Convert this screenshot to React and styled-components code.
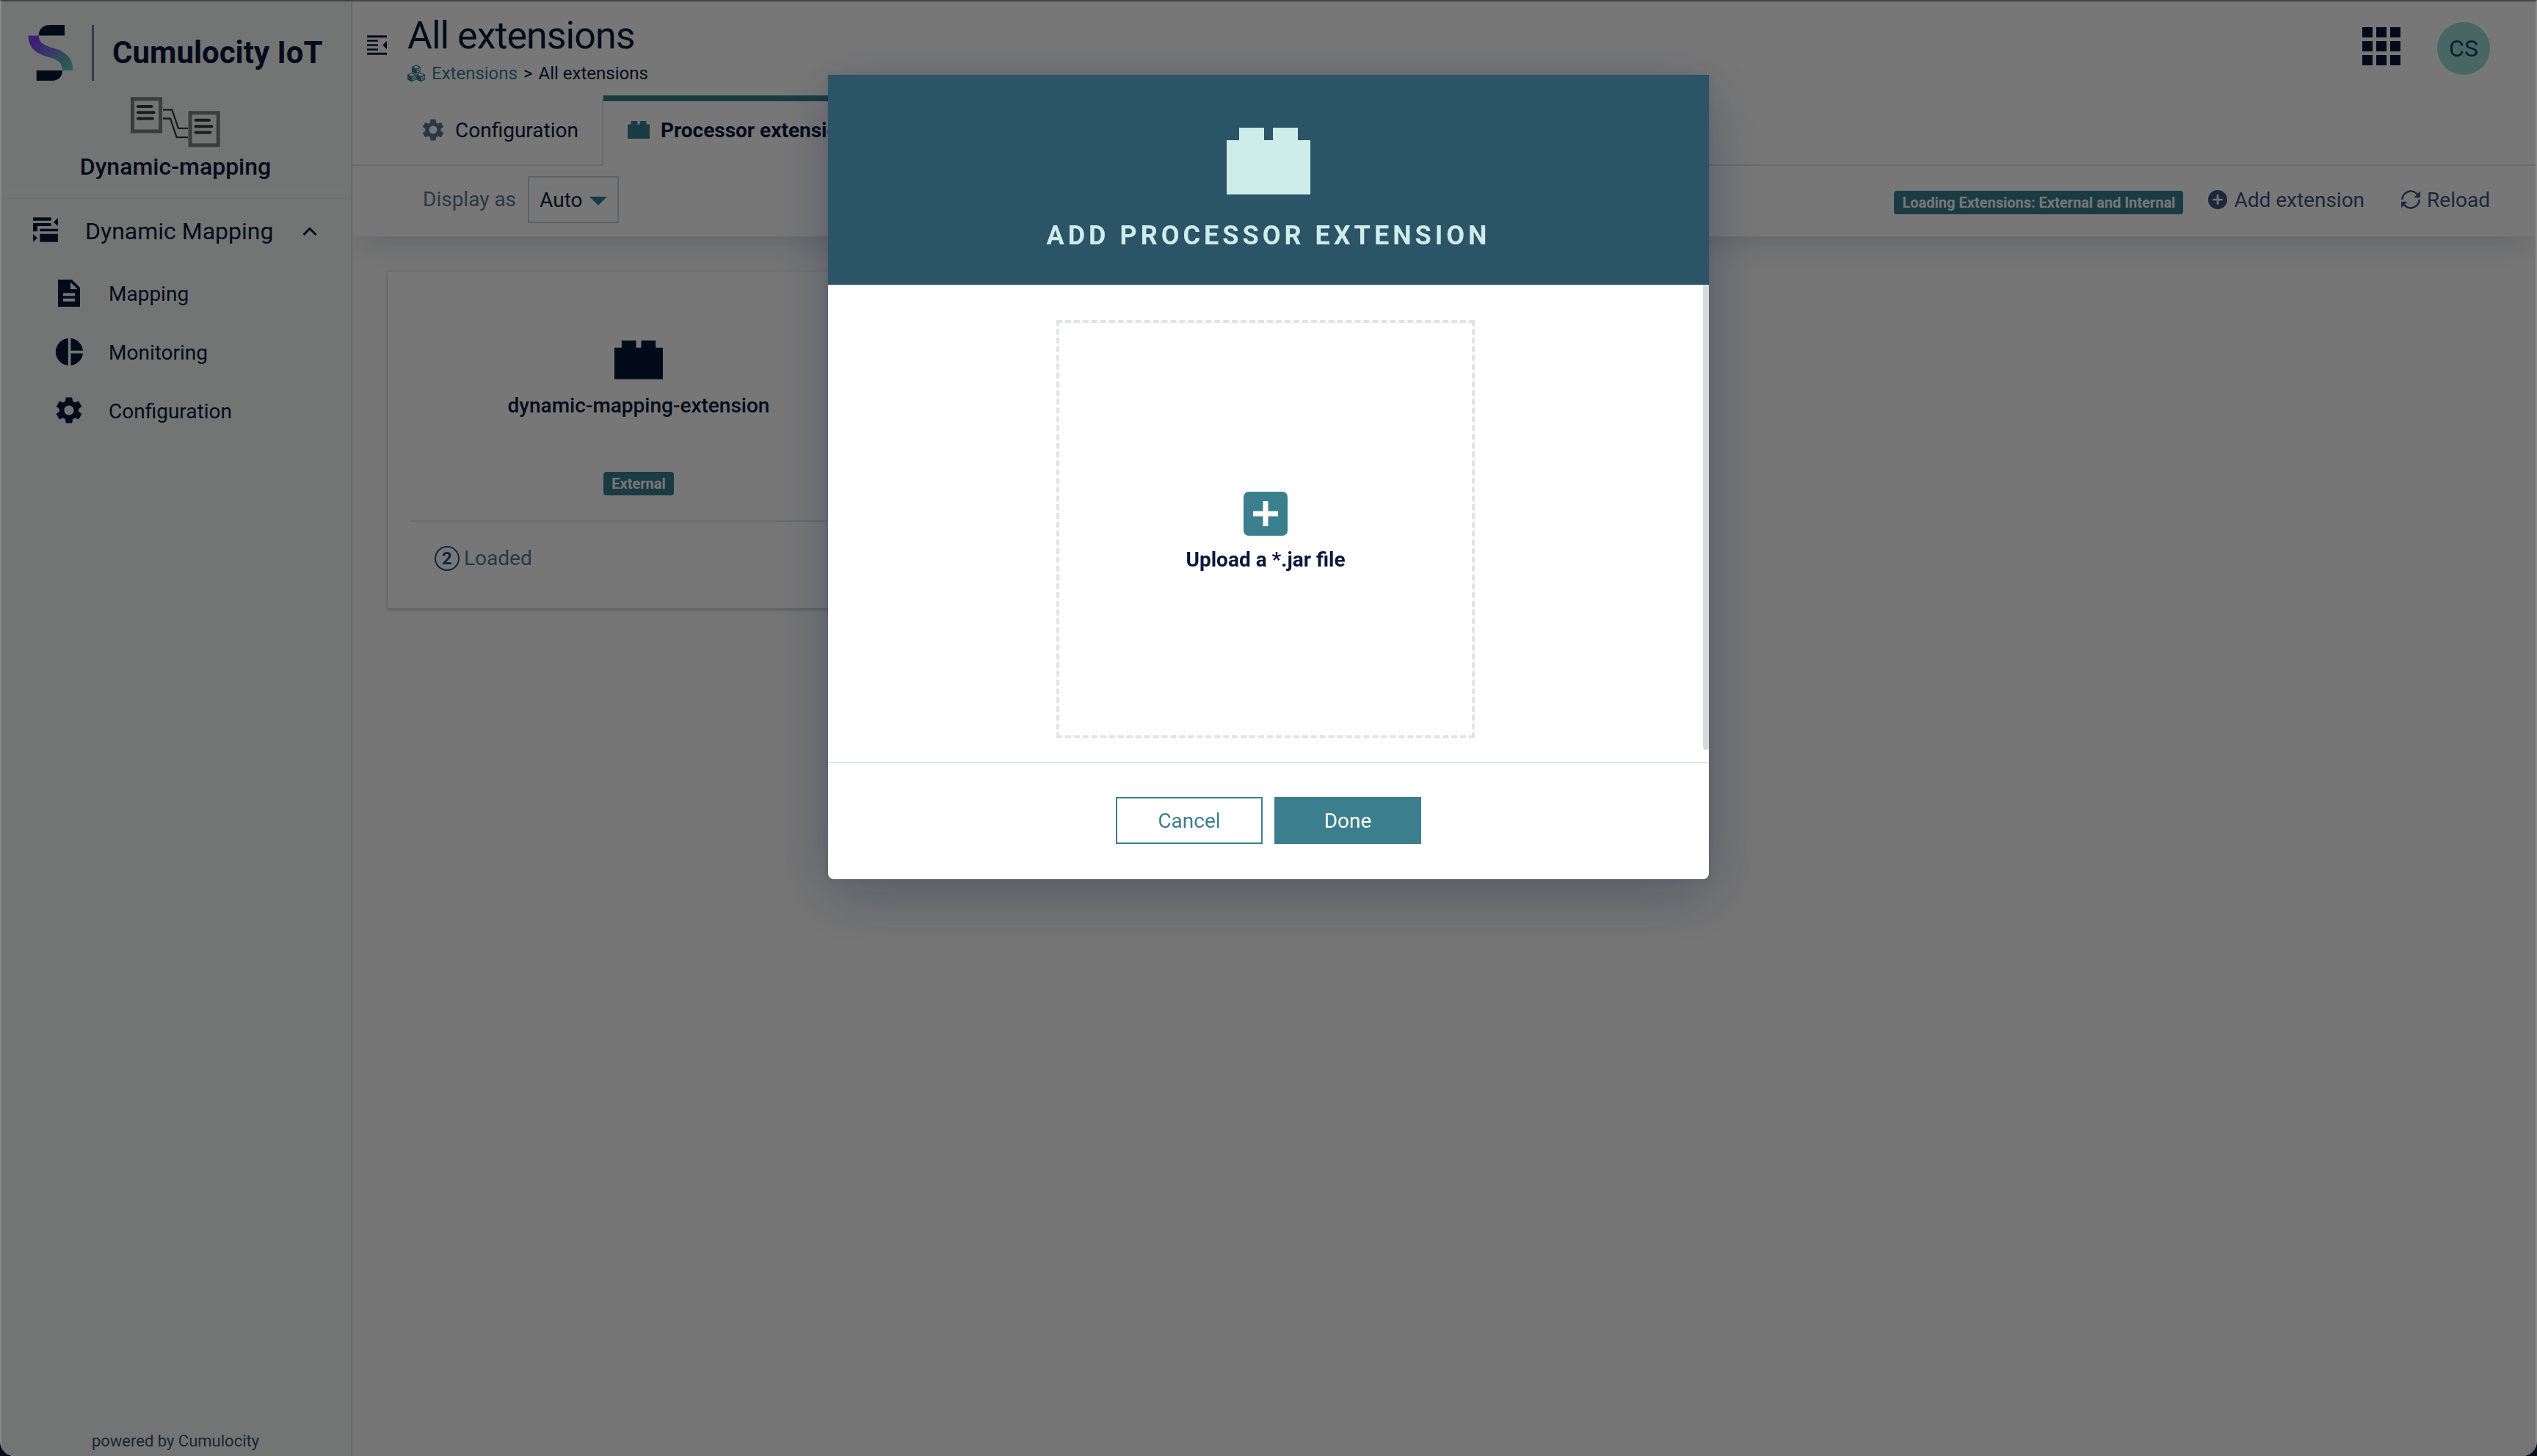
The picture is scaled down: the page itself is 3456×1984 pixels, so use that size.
import React from "react";
import styled, { createGlobalStyle, css } from "styled-components";
import { MdSettings } from "react-icons/md";

const c = {
  ink: "#08193b",
  slate: "#5f7696",
  steel: "#40547a",
  teal: "#3b7f8f",
  line: "#e0e4e8",
  field: "#c6d2dc",
  mint: "#ceecea",
};

const GlobalStyle = createGlobalStyle`
  *, *::before, *::after { box-sizing: border-box; }
  body {
    margin: 0;
    background: #020c1c;
    color: ${c.ink};
    font-size: 28px;
    line-height: 40px;
  }
  body, button, select, input { font-family: Roboto, "Liberation Sans", sans-serif; }
  h1, h2, h3, p, ul, ol { margin: 0; padding: 0; }
  ul, ol { list-style: none; }
  a { color: inherit; text-decoration: none; }
  svg { display: block; flex: none; }
`;

const bareButton = css`
  border: 0;
  padding: 0;
  background: none;
  color: inherit;
  font-size: 28px;
  cursor: pointer;
`;

const Window = styled.div`
  display: flex;
  min-height: 100vh;
  border: 2px solid #898989;
  border-top-color: #444444;
  border-bottom: 0;
  border-radius: 0 0 20px 20px;
  overflow: hidden;
  background: #fbfbfb;
`;

/* ---------- navigator ---------- */

const Sidebar = styled.aside`
  display: flex;
  flex-direction: column;
  flex: none;
  width: 478px;
  background: #f7faf9;
  border-right: 2px solid #dfe2e2;
`;

const Brand = styled.div`
  display: flex;
  align-items: center;
  gap: 25px;
  height: 76px;
  margin: 32px 0 22px;
  padding-left: 36px;
  font-size: 42px;
  font-weight: 700;
`;

const BrandRule = styled.span`
  width: 3px;
  height: 76px;
  background: #6d839f;
`;

const AppHeading = styled.div`
  display: flex;
  flex-direction: column;
  align-items: center;
  gap: 6px;
  padding: 0 2px 6px 0;
  border-bottom: 1px solid #f1f4f3;
  font-size: 32px;
  font-weight: 500;
`;

const Nav = styled.nav`
  margin-top: 16px;
  border-top: 1px solid #f1f4f3;
`;

const NavGroup = styled.button`
  ${bareButton}
  display: flex;
  align-items: center;
  gap: 36px;
  width: 100%;
  height: 88px;
  padding: 0 46px 0 42px;
  font-size: 32px;
`;

const NavLabel = styled.span`
  flex: 1;
  text-align: left;
`;

const NavList = styled.ul`
  padding-top: 2px;
`;

const NavLink = styled.a`
  display: flex;
  align-items: center;
  gap: 34px;
  height: 80px;
  padding-left: 72px;
`;

const NavIcon = styled.span`
  display: flex;
  justify-content: center;
  width: ${(p) => p.$width}px;
  padding-bottom: 4px;
`;

const Powered = styled.p`
  margin-top: auto;
  padding: 0 2px 4px 0;
  text-align: center;
  color: #3d506e;
  font-size: 22px;
  line-height: 32px;
`;

/* ---------- main column ---------- */

const Main = styled.main`
  flex: 1;
  min-width: 0;
  overflow: hidden;
`;

const TopPanel = styled.div`
  background: #ffffff;
  box-shadow: 0 20px 40px -12px rgba(8, 25, 59, 0.15);
`;

const Header = styled.header`
  display: flex;
  align-items: flex-start;
  height: 128px;
  padding: 16px 62px 0 20px;
`;

const ToggleButton = styled.button`
  ${bareButton}
  margin: 30px 28px 0 0;
`;

const Heading = styled.div`
  flex: 1;
`;

const PageTitle = styled.h1`
  font-size: 52px;
  font-weight: 400;
  letter-spacing: -1px;
  line-height: 62px;
`;

const Crumbs = styled.ol`
  display: flex;
  align-items: center;
  gap: 8px;
  margin-top: 4px;
  font-size: 24px;
  line-height: 32px;
`;

const CrumbLink = styled.a`
  display: flex;
  align-items: center;
  gap: 9px;
  color: ${c.teal};
`;

const HeaderTools = styled.div`
  display: flex;
  align-items: center;
  gap: 50px;
  padding-top: 12px;
`;

const AppsButton = styled.button`
  ${bareButton}
  padding-bottom: 6px;
`;

const Avatar = styled.button`
  ${bareButton}
  width: 72px;
  height: 72px;
  border-radius: 50%;
  background: #9bdcd6;
  color: #213f5a;
  font-size: 32px;
`;

const Tabs = styled.div`
  display: flex;
  height: 96px;
  padding-left: 62px;
  background: linear-gradient(${c.line}, ${c.line}) 0 100% / 62px 2px no-repeat;
`;

const Tab = styled.button`
  ${bareButton}
  display: flex;
  align-items: center;
  gap: 14px;
  padding: 0 32px;
  border-bottom: 2px solid ${c.line};
  white-space: nowrap;
  ${(p) =>
    p.$active &&
    css`
      border: 0 solid ${c.line};
      border-width: 0 2px;
      padding-bottom: 2px;
      box-shadow: inset 0 8px ${c.teal};
      font-weight: 700;
    `}
`;

const TabIcon = styled.span`
  display: flex;
  justify-content: center;
  width: 32px;
  color: ${(p) => (p.$active ? c.teal : c.slate)};
`;

const TabRest = styled.div`
  flex: 1;
  border-bottom: 2px solid ${c.line};
`;

const Toolbar = styled.div`
  display: flex;
  align-items: center;
  height: 96px;
  padding: 14px 62px 18px 96px;
`;

const FieldLabel = styled.label`
  color: ${c.slate};
`;

const SelectBox = styled.div`
  display: grid;
  align-items: center;
  margin: 0 auto 0 16px;

  & > * { grid-area: 1 / 1; }
  & > svg { justify-self: end; margin: 4px 16px 0 0; pointer-events: none; }
`;

const Select = styled.select`
  appearance: none;
  width: 124px;
  height: 64px;
  padding: 0 14px;
  border: 2px solid ${c.field};
  border-radius: 0;
  background: #ffffff;
  color: ${c.ink};
  font-size: 28px;
`;

const Badge = styled.span`
  height: 32px;
  padding: 0 11px;
  border-radius: 4px;
  background: ${c.teal};
  color: #ffffff;
  font-size: 20px;
  font-weight: 700;
  line-height: 32px;
`;

const Status = styled.div`
  display: flex;
  margin-top: 8px;
`;

const ToolButton = styled.button`
  ${bareButton}
  display: flex;
  align-items: center;
  gap: 9px;
  margin-left: ${(p) => p.$space}px;
  color: ${c.steel};
`;

const Content = styled.section`
  padding: 48px;
`;

const Card = styled.article`
  width: 684px;
  background: #ffffff;
  box-shadow: 0 2px 4px rgba(8, 25, 59, 0.25), 0 0 2px rgba(8, 25, 59, 0.15);
`;

const CardBody = styled.div`
  display: flex;
  flex-direction: column;
  align-items: center;
  margin: 0 32px;
  padding: 94px 0 34px;
  border-bottom: 2px solid ${c.line};
`;

const CardTitle = styled.h3`
  margin: 16px 0 70px;
  font-size: 28px;
  font-weight: 500;
`;

const CardFooter = styled.div`
  display: flex;
  align-items: center;
  gap: 6px;
  padding: 30px 64px 48px;
  color: ${c.slate};
`;

const Count = styled.span`
  width: 34px;
  height: 34px;
  border: 2px solid #26568f;
  border-radius: 50%;
  color: #26508a;
  font-size: 24px;
  font-weight: 700;
  line-height: 30px;
  text-align: center;
`;

/* ---------- dialog ---------- */

const Backdrop = styled.div`
  position: fixed;
  inset: 2px 2px 0;
  display: flex;
  justify-content: center;
  align-items: flex-start;
  padding-top: 100px;
  border-radius: 0 0 18px 18px;
  overflow: hidden;
  background: rgba(0, 0, 0, 0.533);
`;

const Dialog = styled.div`
  width: 1200px;
  border-radius: 0 0 8px 8px;
  background: #ffffff;
  box-shadow: 0 0 8px rgba(8, 25, 59, 0.08), 0 20px 80px rgba(8, 25, 59, 0.3);
`;

const DialogHeader = styled.header`
  display: flex;
  flex-direction: column;
  align-items: center;
  gap: 36px;
  padding: 72px 0 47px;
  background: #2b5466;
  color: ${c.mint};
`;

const DialogTitle = styled.h2`
  font-size: 36px;
  font-weight: 700;
  letter-spacing: 5px;
  text-transform: uppercase;
`;

const DialogBody = styled.div`
  display: flex;
  height: 650px;
`;

const DropArea = styled.div`
  display: flex;
  flex: 1;
  justify-content: center;
  padding-top: 48px;
`;

const DropZone = styled.button`
  ${bareButton}
  display: flex;
  flex-direction: column;
  align-items: center;
  justify-content: center;
  gap: 13px;
  width: 570px;
  height: 570px;
  padding-top: 10px;
  border: 4px dashed ${c.line};
  font-weight: 700;
  line-height: 40px;
`;

const ScrollThumb = styled.div`
  width: 8px;
  height: 634px;
  border-radius: 0 0 4px 4px;
  background: #d6d9db;
`;

const DialogFooter = styled.footer`
  display: flex;
  justify-content: center;
  gap: 16px;
  padding: 46px 0 48px;
  border-top: 2px solid ${c.line};
`;

const ActionButton = styled.button`
  width: 200px;
  height: 64px;
  border: 2px solid ${c.teal};
  background: ${(p) => (p.$primary ? c.teal : "#ffffff")};
  color: ${(p) => (p.$primary ? "#ffffff" : c.teal)};
  font-size: 28px;
  cursor: pointer;
`;

/* ---------- drawings ---------- */

const Brick = ({ width }) => (
  <svg width={width} viewBox="0 0 114 91" fill="currentColor" aria-hidden="true">
    <path d="M0 17H17V0H51V17H63V0H97V17H114V91H0Z" />
  </svg>
);

const LogoMark = () => (
  <svg width="62" height="76" viewBox="0 0 181 226" aria-hidden="true">
    <defs>
      <linearGradient id="band" x1="0" y1="0.2" x2="1" y2="0.8">
        <stop offset="0.1" stopColor="#8343f6" />
        <stop offset="1" stopColor="#5fc9b8" />
      </linearGradient>
    </defs>
    <path d="M42 43C42 17 60 0 88 0H147V43Z" fill={c.ink} />
    <path
      d="M0 43H42C42 73 68 84 100 93C150 107 181 132 181 184H138C138 156 122 141 90 132C38 119 0 98 0 43Z"
      fill="url(#band)"
    />
    <path d="M33 184H138C138 209 122 226 95 226H33Z" fill={c.ink} />
  </svg>
);

const Sheet = ({ x, y }) => (
  <g transform={`translate(${x} ${y})`} fill="none">
    <rect x="7.5" y="7.5" width="115" height="133" stroke="#808080" strokeWidth="15" />
    <path
      d="M30 38H86M30 63H96M30 88H90"
      stroke="#3a3a3a"
      strokeWidth="12"
      strokeLinecap="round"
    />
  </g>
);

const MappingArt = () => (
  <svg width="122" height="69" viewBox="0 0 368 206" aria-hidden="true">
    <Sheet x={0} y={0} />
    <Sheet x={237} y={57} />
    <path
      d="M133 52H170L196 128H235M133 88H163L189 165H235"
      fill="none"
      stroke="#3a3a3a"
      strokeWidth="7"
    />
  </svg>
);

const GroupIcon = () => (
  <svg width="34" height="34" viewBox="0 0 102 100" fill="currentColor" aria-hidden="true">
    <path d="M0 0H74V13H0ZM102 2V35L84 19ZM0 23H74V35H18V57H0ZM28 46H102V57H28ZM28 67H102V100H28ZM0 68L18 84L0 100Z" />
  </svg>
);

const ChevronUp = () => (
  <svg width="20" height="13" viewBox="0 0 20 13" fill="none" aria-hidden="true">
    <path d="M1.5 11L10 2.5L18.500 11" stroke="currentColor" strokeWidth="3" />
  </svg>
);

const DocIcon = () => (
  <svg width="30" height="37" viewBox="0 0 90 111" fill="currentColor" aria-hidden="true">
    <path
      fillRule="evenodd"
      d="M0 0H57L90 33V111H0ZM51 11V39H80ZM21 55H69V67H21ZM21 77H69V89H21Z"
    />
  </svg>
);

const PieIcon = () => (
  <svg width="37" height="37" viewBox="0 0 110 110" fill="currentColor" aria-hidden="true">
    <path d="M50 0.200A55 55 0 0 0 50 109.800ZM61 0.300A55 55 0 0 1 109.800 50H61ZM61 61H109.800A55 55 0 0 1 61 109.700Z" />
  </svg>
);

const CollapseIcon = () => (
  <svg width="27" height="27" viewBox="0 0 81 80" fill="currentColor" aria-hidden="true">
    <path d="M0 0H81V9H0ZM0 18H45V26H0ZM0 36H45V44H0ZM0 54H45V62H0ZM0 71H81V80H0ZM81 23V57L64 40Z" />
  </svg>
);

const Cube = ({ x, y }) => (
  <g transform={`translate(${x} ${y})`}>
    <path
      fillRule="evenodd"
      d="M18 0L36 9V30L18 39L0 30V9ZM18 4L6 10L18 16L30 10ZM21 20V33L33 27V14ZM24 22L30 19V25L24 28Z"
    />
  </g>
);

const CubesIcon = () => (
  <svg width="24" height="24" viewBox="0 0 73 72" fill="currentColor" aria-hidden="true">
    <Cube x={18} y={0} />
    <Cube x={0} y={32} />
    <Cube x={37} y={32} />
  </svg>
);

const AppsIcon = () => (
  <svg width="52" height="52" viewBox="0 0 52 52" fill="currentColor" aria-hidden="true">
    {[0, 19, 38].map((y) =>
      [0, 19, 38].map((x) => <rect key={`${x}-${y}`} x={x} y={y} width="14" height="14" />)
    )}
  </svg>
);

const Caret = () => (
  <svg width="24" height="12" viewBox="0 0 24 12" fill={c.teal} aria-hidden="true">
    <path d="M0 0H24L12 12Z" />
  </svg>
);

const PlusCircle = () => (
  <svg width="26" height="26" viewBox="0 0 78 78" fill="currentColor" aria-hidden="true">
    <path
      fillRule="evenodd"
      d="M39 0A39 39 0 1 0 39 78A39 39 0 1 0 39 0ZM35 19H43V35H59V43H43V59H35V43H19V35H35Z"
    />
  </svg>
);

const ReloadIcon = () => (
  <svg width="26" height="26" viewBox="0 0 78 78" aria-hidden="true">
    <path
      d="M4 39A35 35 0 0 1 67 19M74 39A35 35 0 0 1 11 59"
      fill="none"
      stroke="currentColor"
      strokeWidth="8"
    />
    <path d="M78 5V31H52ZM0 73V47H26Z" fill="currentColor" />
  </svg>
);

const PlusSquare = () => (
  <svg width="60" height="60" viewBox="0 0 60 60" aria-hidden="true">
    <rect width="60" height="60" rx="7" fill={c.teal} />
    <path d="M30 13V47M13 30H47" stroke="#ffffff" strokeWidth="7" />
  </svg>
);

/* ---------- page ---------- */

const links = [
  { label: "Mapping", icon: <DocIcon /> },
  { label: "Monitoring", icon: <PieIcon /> },
  { label: "Configuration", icon: <MdSettings size={44} /> },
];

export default function App() {
  return (
    <>
      <GlobalStyle />
      <Window>
        <Sidebar>
          <Brand>
            <LogoMark />
            <BrandRule />
            <span>Cumulocity IoT</span>
          </Brand>
          <AppHeading>
            <MappingArt />
            <span>Dynamic-mapping</span>
          </AppHeading>
          <Nav aria-label="Navigator">
            <NavGroup type="button" aria-expanded="true">
              <NavIcon $width={36}>
                <GroupIcon />
              </NavIcon>
              <NavLabel>Dynamic Mapping</NavLabel>
              <ChevronUp />
            </NavGroup>
            <NavList>
              {links.map((link) => (
                <li key={link.label}>
                  <NavLink href="#">
                    <NavIcon $width={40}>{link.icon}</NavIcon>
                    {link.label}
                  </NavLink>
                </li>
              ))}
            </NavList>
          </Nav>
          <Powered>powered by Cumulocity</Powered>
        </Sidebar>

        <Main>
          <TopPanel>
            <Header>
              <ToggleButton type="button" aria-label="Toggle navigator">
                <CollapseIcon />
              </ToggleButton>
              <Heading>
                <PageTitle>All extensions</PageTitle>
                <Crumbs>
                  <li>
                    <CrumbLink href="#">
                      <CubesIcon />
                      Extensions
                    </CrumbLink>
                  </li>
                  <li aria-hidden="true">&gt;</li>
                  <li>All extensions</li>
                </Crumbs>
              </Heading>
              <HeaderTools>
                <AppsButton type="button" aria-label="Applications">
                  <AppsIcon />
                </AppsButton>
                <Avatar type="button">CS</Avatar>
              </HeaderTools>
            </Header>

            <Tabs role="tablist">
              <Tab type="button" role="tab">
                <TabIcon>
                  <MdSettings size={36} />
                </TabIcon>
                Configuration
              </Tab>
              <Tab type="button" role="tab" aria-selected="true" $active>
                <TabIcon $active>
                  <Brick width={30} />
                </TabIcon>
                Processor extensions
              </Tab>
              <TabRest />
            </Tabs>

            <Toolbar>
              <FieldLabel htmlFor="display-as">Display as</FieldLabel>
              <SelectBox>
                <Select id="display-as" defaultValue="Auto">
                  <option>Auto</option>
                </Select>
                <Caret />
              </SelectBox>
              <Status>
                <Badge>Loading Extensions: External and Internal</Badge>
              </Status>
              <ToolButton type="button" $space={34}>
                <PlusCircle />
                Add extension
              </ToolButton>
              <ToolButton type="button" $space={50}>
                <ReloadIcon />
                Reload
              </ToolButton>
            </Toolbar>
          </TopPanel>

          <Content>
            <Card>
              <CardBody>
                <Brick width={66} />
                <CardTitle>dynamic-mapping-extension</CardTitle>
                <Badge>External</Badge>
              </CardBody>
              <CardFooter>
                <Count>2</Count>
                Loaded
              </CardFooter>
            </Card>
          </Content>
        </Main>
      </Window>

      <Backdrop>
        <Dialog role="dialog" aria-modal="true" aria-labelledby="dialog-title">
          <DialogHeader>
            <Brick width={114} />
            <DialogTitle id="dialog-title">Add processor extension</DialogTitle>
          </DialogHeader>
          <DialogBody>
            <DropArea>
              <DropZone type="button">
                <PlusSquare />
                Upload a *.jar file
              </DropZone>
            </DropArea>
            <ScrollThumb />
          </DialogBody>
          <DialogFooter>
            <ActionButton type="button">Cancel</ActionButton>
            <ActionButton type="button" $primary>
              Done
            </ActionButton>
          </DialogFooter>
        </Dialog>
      </Backdrop>
    </>
  );
}
